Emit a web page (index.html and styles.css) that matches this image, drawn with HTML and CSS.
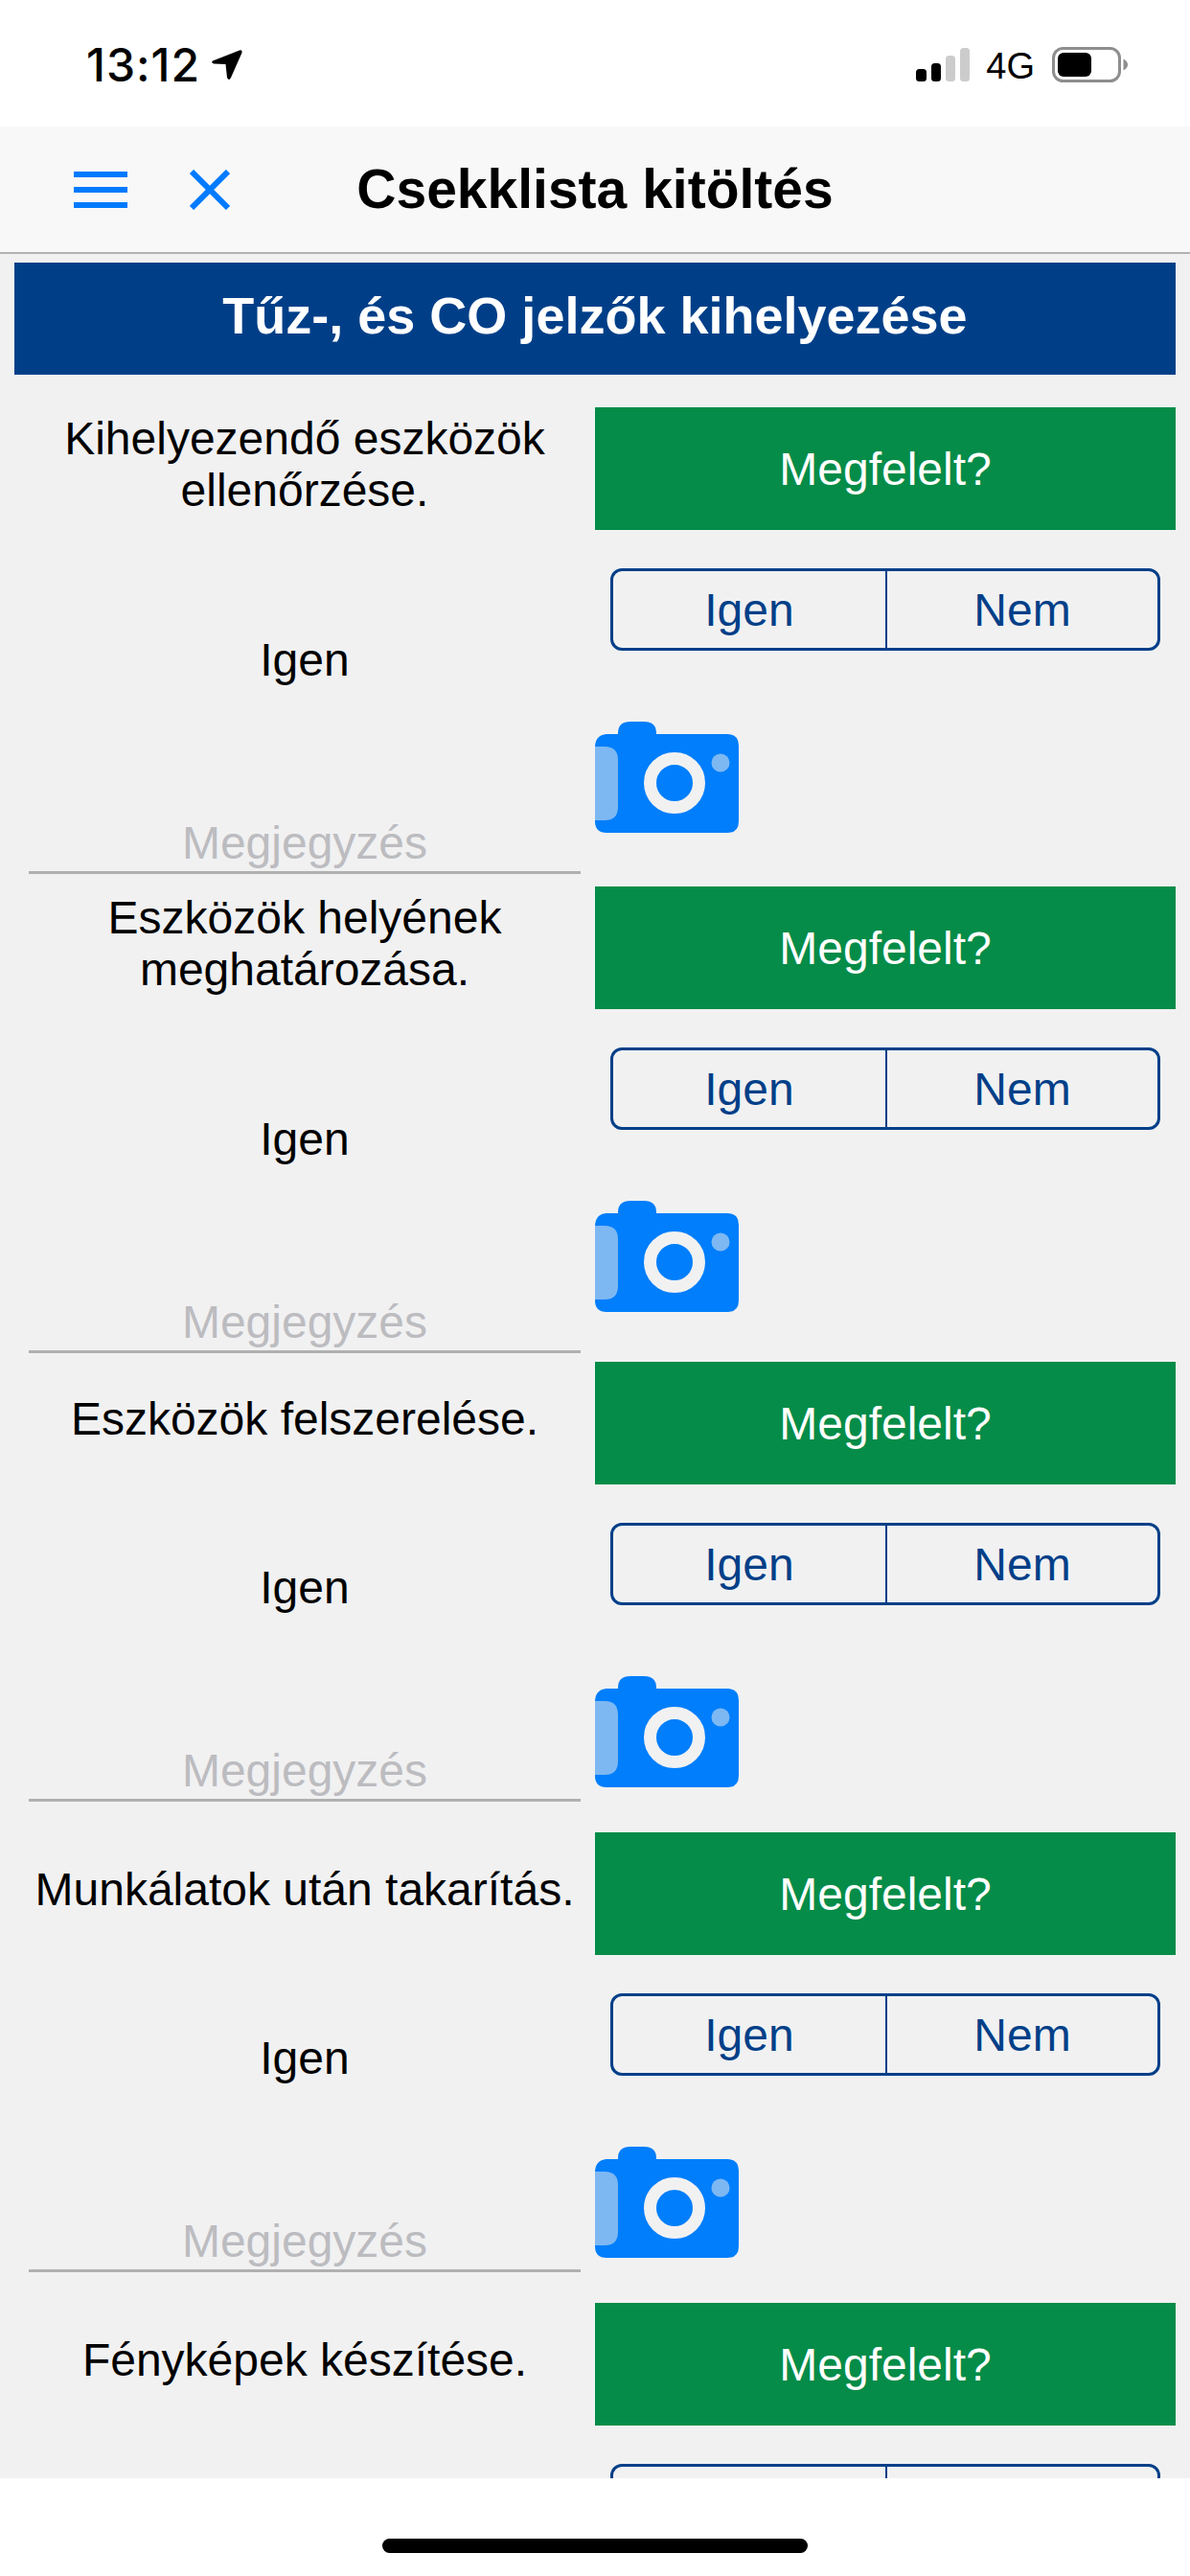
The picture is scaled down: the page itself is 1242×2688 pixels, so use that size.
FILE: index.html
```html
<!DOCTYPE html>
<html lang="hu">
<head>
<meta charset="utf-8">
<title>Csekklista kitöltés</title>
<link rel="stylesheet" href="styles.css">
</head>
<body>
<svg class="defs" width="0" height="0">
  <symbol id="cam" viewBox="0 0 150 116">
    <path fill="#007efb" d="M0 27 Q0 14 12 13 H24 V12 Q24 0 37 0 H51 Q64 0 64 12 V13 H138 Q150 13 150 25 V104 Q150 116 138 116 H12 Q0 116 0 104 Z"/>
    <path fill="#7db8f2" d="M0 26 H10 Q24 26 24 40 V89 Q24 103 10 103 H0 Z"/>
    <circle cx="83" cy="64" r="25.500" fill="none" stroke="#f1f1f2" stroke-width="13"/>
    <circle cx="131" cy="43" r="9.500" fill="#7db8f2"/>
  </symbol>
</svg>
<div class="screen">
  <header class="status">
    <div class="status-left">
      <span class="time">13:12</span>
      <svg class="loc" viewBox="0 0 32 32"><path d="M1 11.500 L29 0.500 Q32 -0.500 31.500 3 L20 29 Q18 33 16 29 L14.500 15 L2 14.500 Q-1 13 1 11.500 Z"/></svg>
    </div>
    <div class="status-right">
      <svg class="signal" viewBox="0 0 56 35"><rect x="0" y="22" width="11" height="13" rx="3.500" fill="#000"/><rect x="16" y="16" width="10" height="19" rx="3.500" fill="#000"/><rect x="31" y="8" width="10" height="27" rx="3.500" fill="#ccc"/><rect x="46" y="0" width="10" height="35" rx="3.500" fill="#ccc"/></svg>
      <span class="net">4G</span>
      <svg class="batt" viewBox="0 0 79 37"><rect x="1.500" y="1.500" width="69" height="34" rx="10" fill="none" stroke="#8e8e8e" stroke-width="3"/><rect x="6" y="6" width="35" height="25" rx="6" fill="#000"/><path d="M74.500 12.500 Q79 15 79 18.500 Q79 22 74.500 24.500 Z" fill="#8e8e8e"/></svg>
    </div>
  </header>
  <nav class="navbar">
    <div class="nav-tools">
      <div class="burger"><i></i><i></i><i></i></div>
      <svg class="close" viewBox="0 0 42 42"><path d="M2 2 L40 40 M40 2 L2 40" stroke="#007aff" stroke-width="6" fill="none"/></svg>
    </div>
    <h1 class="nav-title">Csekklista kitöltés</h1>
  </nav>
  <main class="content">
    <h2 class="banner">Tűz-, és CO jelzők kihelyezése</h2>

    <section class="item item-a">
      <div class="side">
        <p class="label">Kihelyezendő eszközök ellenőrzése.</p>
        <p class="answer">Igen</p>
        <div class="note">Megjegyzés</div>
      </div>
      <div class="side">
        <div class="verdict">Megfelelt?</div>
        <div class="seg"><span>Igen</span><span>Nem</span></div>
        <svg class="camera"><use href="#cam"/></svg>
      </div>
    </section>

    <section class="item item-b">
      <div class="side">
        <p class="label">Eszközök helyének meghatározása.</p>
        <p class="answer">Igen</p>
        <div class="note">Megjegyzés</div>
      </div>
      <div class="side">
        <div class="verdict">Megfelelt?</div>
        <div class="seg"><span>Igen</span><span>Nem</span></div>
        <svg class="camera"><use href="#cam"/></svg>
      </div>
    </section>

    <section class="item item-c">
      <div class="side">
        <p class="label label-single">Eszközök felszerelése.</p>
        <p class="answer">Igen</p>
        <div class="note">Megjegyzés</div>
      </div>
      <div class="side">
        <div class="verdict">Megfelelt?</div>
        <div class="seg"><span>Igen</span><span>Nem</span></div>
        <svg class="camera"><use href="#cam"/></svg>
      </div>
    </section>

    <section class="item item-c">
      <div class="side">
        <p class="label label-single">Munkálatok után takarítás.</p>
        <p class="answer">Igen</p>
        <div class="note">Megjegyzés</div>
      </div>
      <div class="side">
        <div class="verdict">Megfelelt?</div>
        <div class="seg"><span>Igen</span><span>Nem</span></div>
        <svg class="camera"><use href="#cam"/></svg>
      </div>
    </section>

    <section class="item item-c">
      <div class="side">
        <p class="label label-single">Fényképek készítése.</p>
      </div>
      <div class="side">
        <div class="verdict">Megfelelt?</div>
        <div class="seg"><span></span><span></span></div>
      </div>
    </section>
  </main>
  <footer class="home"><div class="home-bar"></div></footer>
</div>
</body>
</html>
```
FILE: styles.css
```css
* { box-sizing: border-box; }
html, body { margin: 0; padding: 0; background: #fff; }
.defs { position: absolute; }
.screen { width: 1242px; height: 2688px; display: flex; flex-direction: column; overflow: hidden; font-family: "Liberation Sans", Arial, sans-serif; color: #000; }

.status { height: 132px; flex: none; display: flex; justify-content: space-between; align-items: center; padding: 3px 65px 0 90px; background: #fff; }
.status-left { display: flex; align-items: center; gap: 12px; }
.time { font-family: Inter, sans-serif; font-size: 48px; font-weight: 500; letter-spacing: 1px; line-height: 1; }
.loc { width: 32px; height: 32px; fill: #000; }
.status-right { display: flex; align-items: center; }
.signal { width: 56px; height: 35px; margin-right: 17px; }
.net { font-size: 38px; line-height: 1; margin-right: 18px; padding-top: 3px; }
.batt { width: 79px; height: 37px; }

.navbar { height: 133px; flex: none; display: grid; grid-template-columns: 1fr auto 1fr; align-items: center; background: #f8f8f8; border-bottom: 2px solid #b2b2b2; padding-left: 77px; padding-right: 77px; }
.nav-tools { display: flex; align-items: center; gap: 65px; }
.burger { width: 56px; display: flex; flex-direction: column; gap: 10px; }
.burger i { display: block; height: 6px; background: #007aff; }
.close { width: 42px; height: 42px; }
.nav-title { margin: 0; font-size: 57px; font-weight: 700; line-height: 1; }

.content { flex: 1; min-height: 0; overflow: hidden; background: #f1f1f2; padding: 9px 15px 0; }
.banner { margin: 0 0 34px; height: 117px; display: flex; align-items: center; justify-content: center; padding-bottom: 8px; background: #003f88; color: #fff; font-size: 54px; font-weight: 700; }

.item { display: grid; grid-template-columns: 606px 606px; }
.item-a { height: 500px; }
.item-b { height: 496px; }
.item-c { height: 491px; }

.side { display: flex; flex-direction: column; min-width: 0; }
.label { margin: 0; height: 120px; padding: 6px 15px; font-size: 48px; line-height: 54px; text-align: center; }
.label-single { height: 92px; padding: 33px 15px 5px; }
.answer { margin: 0; height: 171px; padding-top: 117px; font-size: 48px; line-height: 54px; text-align: center; }
.note { margin: 0 15px; height: 196px; display: flex; align-items: flex-end; justify-content: center; border-bottom: 3px solid #b0b0b0; color: #bcbcc0; font-size: 48px; line-height: 54px; padding-bottom: 2px; }

.verdict { height: 128px; flex: none; display: flex; align-items: center; justify-content: center; background: #048c48; color: #fff; font-size: 48px; }
.seg { margin: 40px 16px 0; height: 86px; flex: none; display: grid; grid-template-columns: 1fr 1fr; border: 3px solid #003f88; border-radius: 12px; color: #003f88; font-size: 48px; }
.seg span { display: flex; align-items: center; justify-content: center; }
.seg span + span { border-left: 2px solid #003f88; }
.camera { margin-top: 74px; width: 150px; height: 116px; flex: none; display: block; }

.home { height: 102px; flex: none; background: #fff; display: flex; justify-content: center; padding-top: 63px; }
.home-bar { width: 444px; height: 15px; border-radius: 8px; background: #000; }
```
